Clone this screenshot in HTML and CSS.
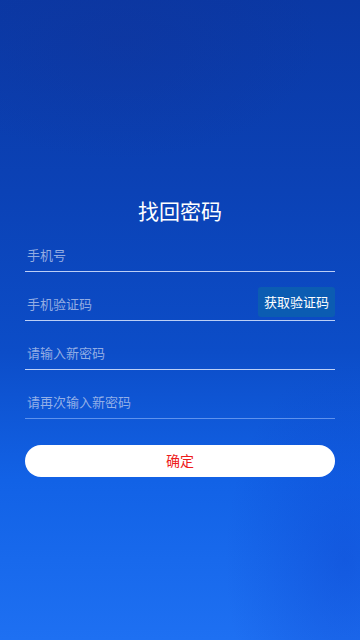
FILE: index.html
```html
<!DOCTYPE html>
<html lang="zh-CN">
<head>
<meta charset="utf-8">
<meta name="viewport" content="width=device-width, initial-scale=1">
<title>找回密码</title>
<link rel="stylesheet" href="styles.css">
</head>
<body>
<div class="page">
  <h1 class="title">找回密码</h1>
  <form class="form">
    <div class="field"><input class="input" type="tel" placeholder="手机号"></div>
    <div class="field"><input class="input" type="text" placeholder="手机验证码"><button type="button" class="code-btn">获取验证码</button></div>
    <div class="field"><input class="input" type="password" placeholder="请输入新密码"></div>
    <div class="field field-last"><input class="input" type="password" placeholder="请再次输入新密码"></div>
    <button type="button" class="submit">确定</button>
  </form>
</div>
</body>
</html>
```

FILE: styles.css
```css
html, body {
  margin: 0;
  padding: 0;
}
body {
  width: 360px;
  min-height: 640px;
  font-family: "Noto Sans CJK SC", "Noto Sans", sans-serif;
  background:
    radial-gradient(ellipse 120px 200px at 345px 560px, rgba(10, 60, 200, 0.35), rgba(10, 60, 200, 0)),
    radial-gradient(ellipse 200px 120px at 120px 40px, rgba(20, 50, 150, 0.3), rgba(20, 50, 150, 0)),
    linear-gradient(180deg, #0a38a4 0%, #0b42b6 30%, #0c4dc8 55%, #1262e6 75%, #1e70f2 100%);
}
.page {
  padding: 197px 25px 0;
}
.title {
  margin: 0;
  text-align: center;
  font-size: 21px;
  line-height: 26px;
  font-weight: 400;
  color: #ffffff;
}
.form {
  display: flex;
  flex-direction: column;
}
.field {
  height: 48px;
  display: flex;
  align-items: flex-end;
  border-bottom: 1px solid rgba(220, 230, 255, 0.85);
}
.field-last {
  border-bottom-color: rgba(160, 195, 255, 0.55);
}
.input {
  flex: 1;
  min-width: 0;
  border: 0;
  outline: 0;
  background: transparent;
  padding: 0 0 8px 2px;
  font-family: inherit;
  font-size: 13px;
  line-height: 18px;
  height: 26px;
  box-sizing: border-box;
  color: #ffffff;
}
.input::placeholder {
  color: rgba(200, 212, 240, 0.72);
}
.code-btn {
  height: 30px;
  margin-bottom: 3px;
  padding: 0 6px 1px;
  border: 0;
  border-radius: 3px;
  background: #0b5cb2;
  color: #ffffff;
  font-family: inherit;
  font-size: 13px;
  line-height: 28px;
}
.submit {
  margin-top: 26px;
  height: 32px;
  border: 0;
  border-radius: 16px;
  background: #ffffff;
  color: #ee1c1c;
  font-family: inherit;
  font-size: 14px;
  line-height: 28px;
  padding: 0 0 3px;
}
```
